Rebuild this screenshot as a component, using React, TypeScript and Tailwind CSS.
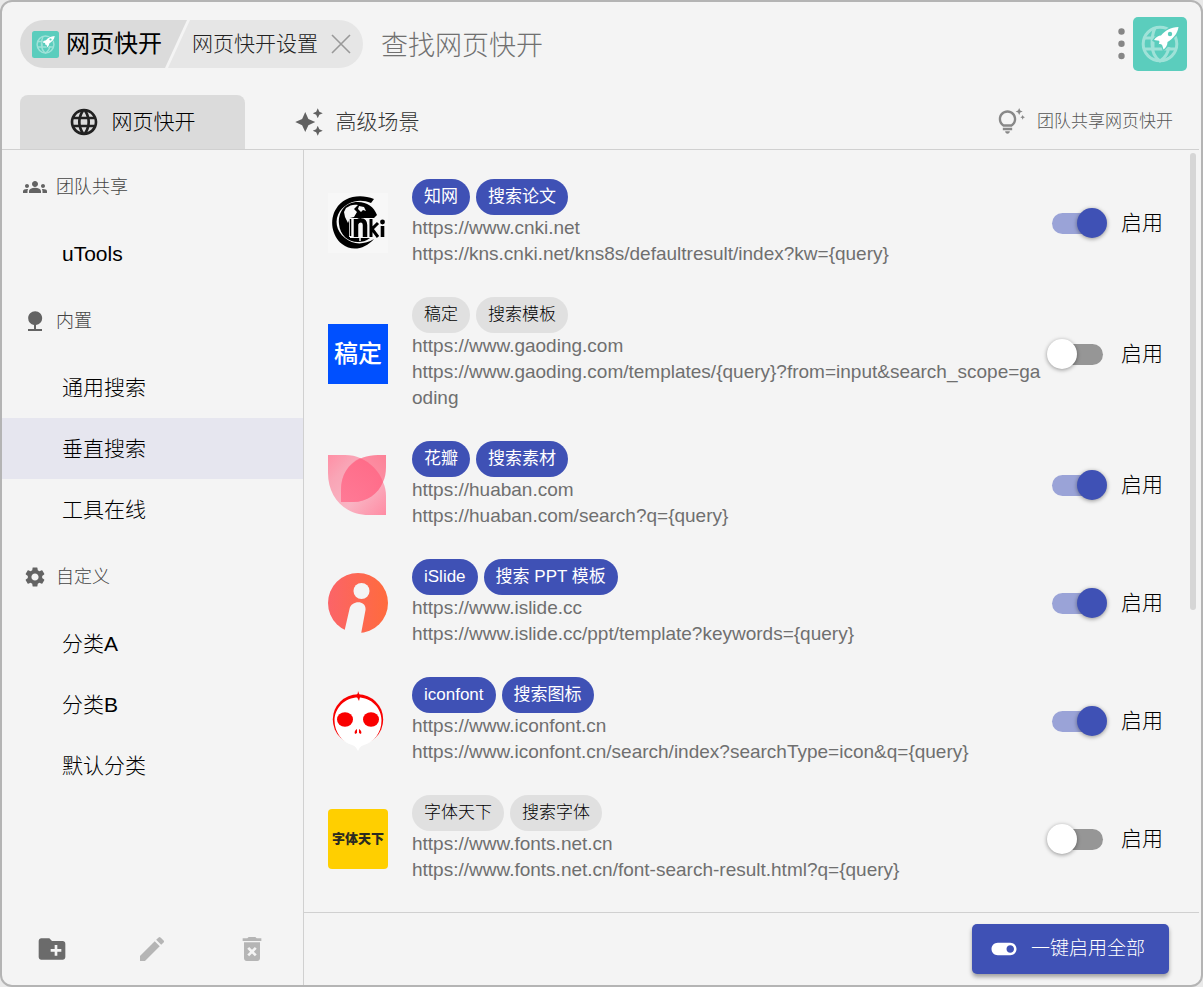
import { useState } from "react";
import {
  MdAutoAwesome,
  MdCreateNewFolder,
  MdDeleteForever,
  MdEdit,
  MdGroups,
  MdLanguage,
  MdNature,
  MdOutlineTipsAndUpdates,
  MdSettings,
  MdToggleOn,
} from "react-icons/md";
import type { IconType } from "react-icons";

interface Site {
  id: string;
  name: string;
  action: string;
  home: string;
  search: string;
  enabled: boolean;
}

const SITES: Site[] = [
  {
    id: "cnki",
    name: "知网",
    action: "搜索论文",
    home: "https://www.cnki.net",
    search: "https://kns.cnki.net/kns8s/defaultresult/index?kw={query}",
    enabled: true,
  },
  {
    id: "gaoding",
    name: "稿定",
    action: "搜索模板",
    home: "https://www.gaoding.com",
    search: "https://www.gaoding.com/templates/{query}?from=input&search_scope=gaoding",
    enabled: false,
  },
  {
    id: "huaban",
    name: "花瓣",
    action: "搜索素材",
    home: "https://huaban.com",
    search: "https://huaban.com/search?q={query}",
    enabled: true,
  },
  {
    id: "islide",
    name: "iSlide",
    action: "搜索 PPT 模板",
    home: "https://www.islide.cc",
    search: "https://www.islide.cc/ppt/template?keywords={query}",
    enabled: true,
  },
  {
    id: "iconfont",
    name: "iconfont",
    action: "搜索图标",
    home: "https://www.iconfont.cn",
    search: "https://www.iconfont.cn/search/index?searchType=icon&q={query}",
    enabled: true,
  },
  {
    id: "fonts",
    name: "字体天下",
    action: "搜索字体",
    home: "https://www.fonts.net.cn",
    search: "https://www.fonts.net.cn/font-search-result.html?q={query}",
    enabled: false,
  },
];

const GROUPS: { title: string; icon: IconType; items: string[] }[] = [
  { title: "团队共享", icon: MdGroups, items: ["uTools"] },
  { title: "内置", icon: MdNature, items: ["通用搜索", "垂直搜索", "工具在线"] },
  { title: "自定义", icon: MdSettings, items: ["分类A", "分类B", "默认分类"] },
];

export default function App() {
  const [sites, setSites] = useState(SITES);
  const [active, setActive] = useState("垂直搜索");

  const toggle = (id: string) =>
    setSites((prev) => prev.map((s) => (s.id === id ? { ...s, enabled: !s.enabled } : s)));

  const enableAll = () => setSites((prev) => prev.map((s) => ({ ...s, enabled: true })));

  return (
    <div className="h-screen bg-[#e9e9e9] font-['Liberation_Sans','Noto_Sans_CJK_SC',sans-serif] text-black">
      <div className="flex h-full flex-col overflow-hidden rounded-xl border-2 border-[#b4b4b4] bg-[#f4f4f4]">
        <Header />
        <Tabs />
        <div className="flex min-h-0 flex-1 pr-0.5">
          <Sidebar active={active} onSelect={setActive} />
          <main className="flex min-w-0 flex-1 flex-col">
            <div className="relative min-h-0 flex-1 overflow-hidden">
              <ul className="flex flex-col gap-[30px] pt-[29px] pr-9 pl-6">
                {sites.map((site) => (
                  <SiteRow key={site.id} site={site} onToggle={() => toggle(site.id)} />
                ))}
              </ul>
              <div className="absolute top-[3px] right-[3px] h-3/5 w-1.5 rounded-full bg-[#d6d6d6]" />
            </div>
            <footer className="flex h-[73px] items-center justify-end border-t border-[#d0d0d0] pr-[30px]">
              <button
                onClick={enableAll}
                className="flex h-[50px] items-center gap-3 rounded-[5px] bg-[#3f51b5] pr-6 pl-[17px] text-[19px] font-light text-white shadow-[0_3px_4px_rgba(0,0,0,0.35)]"
              >
                <MdToggleOn size={30} />
                一键启用全部
              </button>
            </footer>
          </main>
        </div>
      </div>
    </div>
  );
}

function Header() {
  return (
    <header className="flex shrink-0 items-center pt-[15px] pr-3.5 pl-[18px]">
      <div className="flex h-12 shrink-0 overflow-hidden rounded-full font-light">
        <div className="flex w-[167px] items-center gap-[7px] bg-[#dbdbdb] pl-3 text-2xl [clip-path:polygon(0_0,100%_0,calc(100%-22px)_100%,0_100%)]">
          <AppLogo className="h-[27px] w-[27px] shrink-0" />
          <span className="whitespace-nowrap font-normal">网页快开</span>
        </div>
        <div className="-ml-[19px] flex items-center gap-[13px] bg-[#e6e6e6] pr-3 pl-6 text-[21px] text-[#222] [clip-path:polygon(22px_0,100%_0,100%_100%,0_100%)]">
          <span className="whitespace-nowrap">网页快开设置</span>
          <button aria-label="关闭">
            <svg viewBox="0 0 20 20" className="h-5 w-5" stroke="#999" strokeWidth="1.6">
              <path d="M1 1l18 18M19 1L1 19" />
            </svg>
          </button>
        </div>
      </div>
      <input
        type="text"
        aria-label="查找网页快开"
        placeholder="查找网页快开"
        className="ml-4 h-12 min-w-0 flex-1 bg-transparent px-0.5 pt-1 text-[27px] font-light outline-none placeholder:text-[#707070]"
      />
      <button aria-label="菜单" className="px-2">
        <svg viewBox="0 0 7 32" className="h-8 w-[7px]" fill="#868686">
          <circle cx="3.5" cy="3.5" r="3.2" />
          <circle cx="3.5" cy="15.7" r="3.2" />
          <circle cx="3.5" cy="28" r="3.2" />
        </svg>
      </button>
      <AppLogo className="h-[54px] w-[54px] shrink-0" />
    </header>
  );
}

function Tabs() {
  return (
    <nav className="mt-6 mr-0.5 flex shrink-0 border-b border-[#d0d0d0] pr-[26px] pl-[18px] text-[21px] font-light">
      <button className="flex h-[54px] w-[225px] items-center justify-center gap-3 rounded-t-lg bg-[#dbdbdb] pr-0.5">
        <MdLanguage size={32} className="text-[#212121]" />
        网页快开
      </button>
      <button className="flex h-[54px] w-[225px] items-center justify-center gap-3 pr-0.5 text-[#333]">
        <MdAutoAwesome size={30} className="text-[#616161]" />
        高级场景
      </button>
      <a href="#team" className="ml-auto flex items-center gap-3 text-[17px] text-[#555]">
        <MdOutlineTipsAndUpdates size={28} className="text-[#888]" />
        团队共享网页快开
      </a>
    </nav>
  );
}

function Sidebar({ active, onSelect }: { active: string; onSelect: (item: string) => void }) {
  return (
    <aside className="flex w-[302px] shrink-0 flex-col border-r border-[#d0d0d0]">
      <div className="min-h-0 flex-1 overflow-hidden">
        {GROUPS.map(({ title, icon: Icon, items }) => (
          <section key={title}>
            <h2 className="flex h-[73px] items-center gap-[9px] pl-[21px] text-lg font-light text-[#444]">
              <Icon size={24} className="text-[#636363]" />
              {title}
            </h2>
            {items.map((item) => (
              <button
                key={item}
                onClick={() => onSelect(item)}
                className={`block h-[61px] w-full pl-[60px] text-left text-[21px] font-light ${
                  item === active ? "bg-[#e6e6ef]" : ""
                }`}
              >
                {item}
              </button>
            ))}
          </section>
        ))}
      </div>
      <div className="flex h-[73px] items-center justify-around pr-px text-[#b5b5b5]">
        <button aria-label="新建分类" className="text-[#6b6b6b]">
          <MdCreateNewFolder size={32} />
        </button>
        <button aria-label="编辑分类">
          <MdEdit size={32} />
        </button>
        <button aria-label="删除分类">
          <MdDeleteForever size={32} />
        </button>
      </div>
    </aside>
  );
}

function SiteRow({ site, onToggle }: { site: Site; onToggle: () => void }) {
  return (
    <li className="flex items-center">
      <SiteLogo id={site.id} />
      <div className="min-w-0 flex-1 pr-2 pl-6">
        <div className="flex gap-1.5">
          <Chip text={site.name} on={site.enabled} />
          <Chip text={site.action} on={site.enabled} />
        </div>
        <p className="text-[19px] leading-[26px] break-all text-[#6f6f6f]">{site.home}</p>
        <p className="text-[19px] leading-[26px] break-all text-[#6f6f6f]">{site.search}</p>
      </div>
      <label className="flex shrink-0 cursor-pointer items-center gap-[18px] text-[21px] font-light">
        <input type="checkbox" checked={site.enabled} onChange={onToggle} className="peer sr-only" />
        <span className="flex h-[21px] w-[51px] items-center rounded-full bg-[#969696] peer-checked:bg-[#9aa3d7]">
          <span
            className={`h-[30px] w-[30px] shrink-0 rounded-full shadow-[0_1px_4px_rgba(0,0,0,0.4)] ${
              site.enabled ? "ml-[25px] bg-[#3f51b5]" : "-ml-[5px] bg-white"
            }`}
          />
        </span>
        启用
      </label>
    </li>
  );
}

function Chip({ text, on }: { text: string; on: boolean }) {
  return (
    <span
      className={`flex h-9 items-center rounded-full px-3 text-[17px] whitespace-nowrap ${
        on ? "bg-[#3f51b5] text-white" : "bg-[#e0e0e0] font-light text-black"
      }`}
    >
      {text}
    </span>
  );
}

function AppLogo({ className }: { className: string }) {
  return (
    <svg viewBox="0 0 54 54" className={className}>
      <rect width="54" height="54" rx="5" fill="#5bcdbd" />
      <g fill="none" stroke="#9fe2d8" strokeWidth="3">
        <circle cx="27" cy="27" r="16.8" />
        <path d="M22 11c-2 4-3 9-3 16 0 8 2 13 8 17 5-3 8-8 9-14M10 32h33M11 21h12M20 25v7" />
      </g>
      <path
        d="M45.500 10c-8 .5-13.500 3.500-17.500 8.500-2.500 0-5 1.500-7 4.500l5 .8c.8 1 .3 2.200-.3 3.400 1.500-.4 2.800 0 3.500 1l1.300 4.300c2.500-2 4-4.500 4-7.500C40 21.500 44.500 17 45.500 10z"
        fill="#fff"
        stroke="#5bcdbd"
        strokeWidth="2.400"
        paintOrder="stroke"
      />
      <circle cx="37" cy="17" r="2.200" fill="#5bcdbd" />
    </svg>
  );
}

function SiteLogo({ id }: { id: string }) {
  if (id === "gaoding") {
    return (
      <div className="flex h-[60px] w-[60px] shrink-0 items-center justify-center bg-[#0050ff] text-2xl font-medium text-white">
        稿定
      </div>
    );
  }
  if (id === "fonts") {
    return (
      <div className="flex h-[60px] w-[60px] shrink-0 items-center justify-center rounded bg-[#ffcf00] text-[13px] font-black text-[#2b2a20]">
        字体天下
      </div>
    );
  }
  return (
    <svg viewBox="0 0 60 60" className="h-[60px] w-[60px] shrink-0">
      {id === "cnki" && <CnkiMark />}
      {id === "huaban" && <HuabanMark />}
      {id === "islide" && <IslideMark />}
      {id === "iconfont" && <IconfontMark />}
    </svg>
  );
}

function CnkiMark() {
  return (
    <>
      <rect width="60" height="60" fill="#f7f7f7" />
      <path
        d="M46 6C31 0 15 4 8 16 1 27 4 43 14 51c10 8 23 5 32-5-10 6-21 6-29-1C8 38 6 27 12 18 19 9 31 5 43 10z"
        fill="#000"
      />
      <path d="M49 22C46 14 39 9 30 9 17 9 10 19 11 31c1 11 9 18 19 18 4 0 8-1 12-4H22V25h24z" fill="#000" />
      <path d="M18 15c4-3 8-4 12-3l-4 4 3 3-3 5-4 1-2 5-3-6-1-5zM31 13l5 1 2 4-3-1-2 2-3-3z" fill="#f7f7f7" />
      <path d="M32 44v4" stroke="#f7f7f7" strokeWidth="1.500" />
      <g fill="none">
        <path d="M21 25v19h23V25" fill="#f7f7f7" />
        <path d="M22.500 26v17" stroke="#000" strokeWidth="1.500" />
        <path d="M28 44V26M28 31c2-5 9-5 9 1v12" stroke="#000" strokeWidth="4.500" />
        <path d="M43 26v18M50 30l-6 6 6 8" stroke="#000" strokeWidth="3" />
        <path d="M54.500 33v11" stroke="#000" strokeWidth="3.600" />
      </g>
      <circle cx="54.500" cy="29" r="2.400" fill="#000" />
    </>
  );
}

function HuabanMark() {
  return (
    <>
      <defs>
        <linearGradient id="hb-a" x1="0" y1="0" x2="1" y2="1">
          <stop offset="0" stopColor="#ff8fa5" />
          <stop offset="0.250" stopColor="#f9a5b6" />
          <stop offset="0.600" stopColor="#f9b4c3" />
          <stop offset="1" stopColor="#ff8ba3" />
        </linearGradient>
        <linearGradient id="hb-b" x1="1" y1="0" x2="0" y2="1">
          <stop offset="0" stopColor="#ff5c78" />
          <stop offset="1" stopColor="#ff8ba6" />
        </linearGradient>
      </defs>
      <path d="M0 0h17c6 0 11 1 15 3 11 5 19 13 23 24 2 4 3 9 3 14v19H41C16 60 0 42 0 18z" fill="url(#hb-a)" />
      <path d="M58 0H50C28 0 13 14 13 35v12h12c14 0 25-8 30-20 2-4 3-9 3-15z" fill="url(#hb-b)" opacity="0.750" />
      <path d="M32 3c-12 6-19 17-19 32v12h12c14 0 25-8 30-20C51 16 43 8 32 3z" fill="#ff5f80" opacity="0.500" />
    </>
  );
}

function IslideMark() {
  return (
    <>
      <defs>
        <linearGradient id="is-a" x1="0" y1="0" x2="1" y2="0">
          <stop offset="0" stopColor="#fb6468" />
          <stop offset="1" stopColor="#ff6b3d" />
        </linearGradient>
      </defs>
      <circle cx="30" cy="30" r="30" fill="url(#is-a)" />
      <circle cx="33.500" cy="18" r="8" fill="#f4f4f4" />
      <path d="M16 60l5.500-24c2-9 17-9 16 1L33 61z" fill="#f4f4f4" />
    </>
  );
}

function IconfontMark() {
  return (
    <>
      <circle cx="30" cy="28.500" r="25.200" fill="#f90000" />
      <path d="M30 0l2 5h-5c2-1 3-2 3-5z" fill="#f90000" />
      <path
        d="M30 6.500c13 0 23.500 10 23.500 23S45 51.500 36 54c-3 1-4 2-6 6-2-4-3-5-6-6C15 51.500 6.500 42 6.500 29.500S17 6.500 30 6.500z"
        fill="#fff"
      />
      <path d="M29 6h3l-1 4z" fill="#f90000" />
      <ellipse cx="17" cy="28.500" rx="8" ry="7.300" fill="#f90000" />
      <ellipse cx="43" cy="28.500" rx="8" ry="7.300" fill="#f90000" />
      <path d="M29 38c-2 1-3 3-2 5l2-1zM31 38c2 1 3 3 2 5l-2-1z" fill="#f90000" />
    </>
  );
}
